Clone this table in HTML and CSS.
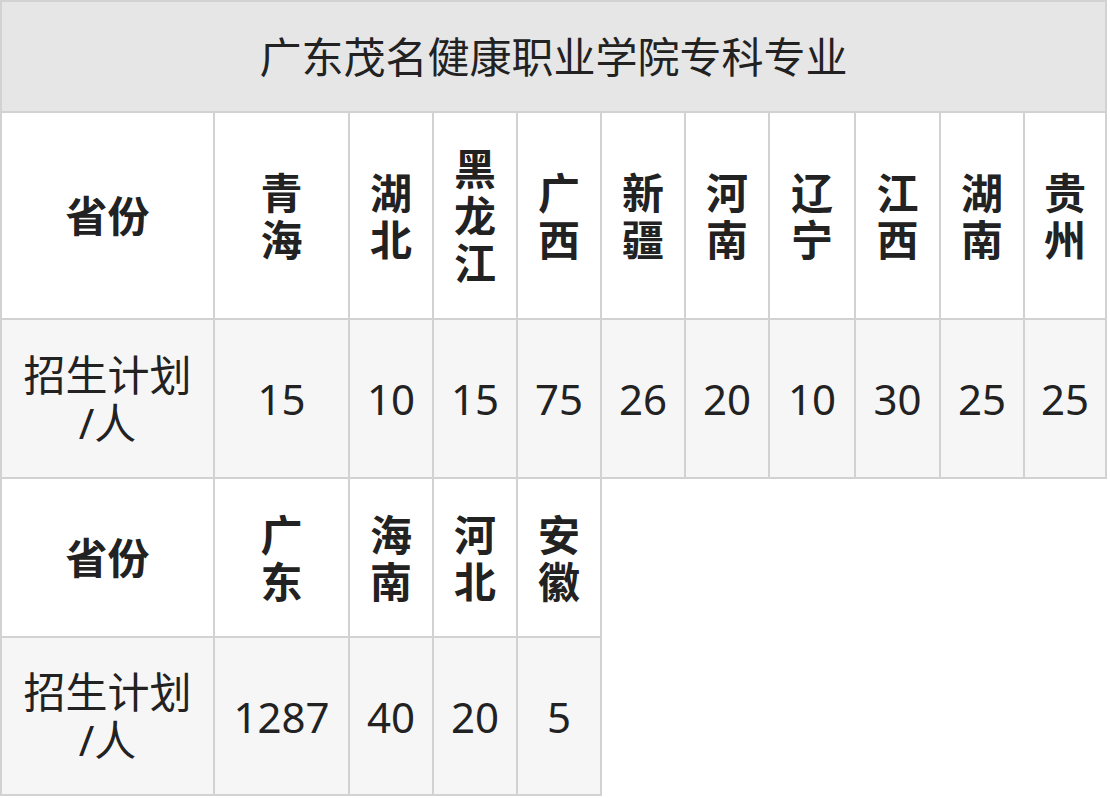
FILE: index.html
```html
<!DOCTYPE html>
<html lang="zh-CN">
<head>
<meta charset="utf-8">
<title>广东茂名健康职业学院专科专业</title>
<link rel="stylesheet" href="styles.css">
</head>
<body>
<table class="plan">
  <colgroup>
    <col class="c-label">
    <col class="c-wide">
    <col class="c-84">
    <col class="c-84">
    <col class="c-84">
    <col class="c-84">
    <col class="c-84">
    <col class="c-86">
    <col class="c-85">
    <col class="c-84">
    <col class="c-82">
  </colgroup>
  <tr class="r-title">
    <th colspan="11" class="title">广东茂名健康职业学院专科专业</th>
  </tr>
  <tr class="r-head">
    <th class="label">省份</th>
    <th><span class="vert">青海</span></th>
    <th><span class="vert">湖北</span></th>
    <th><span class="vert">黑龙江</span></th>
    <th><span class="vert">广西</span></th>
    <th><span class="vert">新疆</span></th>
    <th><span class="vert">河南</span></th>
    <th><span class="vert">辽宁</span></th>
    <th><span class="vert">江西</span></th>
    <th><span class="vert">湖南</span></th>
    <th><span class="vert">贵州</span></th>
  </tr>
  <tr class="r-data">
    <td class="label"><span class="line">招生计划</span><span class="line">/人</span></td>
    <td>15</td>
    <td>10</td>
    <td>15</td>
    <td>75</td>
    <td>26</td>
    <td>20</td>
    <td>10</td>
    <td>30</td>
    <td>25</td>
    <td>25</td>
  </tr>
  <tr class="r-head">
    <th class="label">省份</th>
    <th><span class="vert">广东</span></th>
    <th><span class="vert">海南</span></th>
    <th><span class="vert">河北</span></th>
    <th><span class="vert">安徽</span></th>
  </tr>
  <tr class="r-data r-last">
    <td class="label"><span class="line">招生计划</span><span class="line">/人</span></td>
    <td>1287</td>
    <td>40</td>
    <td>20</td>
    <td>5</td>
  </tr>
</table>
</body>
</html>
```

FILE: styles.css
```css
html, body {
  margin: 0;
  padding: 0;
  background: #ffffff;
}

body {
  font-family: "Noto Sans", "Noto Sans CJK SC", sans-serif;
  color: #222222;
}

.plan {
  border-collapse: collapse;
  table-layout: fixed;
  width: 1107px;
  font-size: 42px;
  line-height: 47px;
}

.c-label { width: 213px; }
.c-wide { width: 135px; }
.c-84 { width: 84px; }
.c-86 { width: 86px; }
.c-85 { width: 85px; }
.c-82 { width: 82px; }

.plan th,
.plan td {
  border: 2px solid #d2d2d2;
  padding: 0;
  text-align: center;
  vertical-align: middle;
}

.plan th {
  font-weight: 700;
}

.plan .title {
  font-weight: 400;
  background: #e6e6e6;
}

.r-title { height: 111px; }
.r-head { height: 207px; background: #ffffff; }
.r-data { height: 159px; background: #f6f6f6; }
.r-head + .r-data + .r-head { height: 159px; }
.r-last { height: 158px; }

.vert {
  display: inline-block;
  width: 1em;
  word-break: break-all;
  vertical-align: middle;
}

.plan td {
  font-weight: 400;
}

.line {
  display: block;
  line-height: 48px;
}
```
